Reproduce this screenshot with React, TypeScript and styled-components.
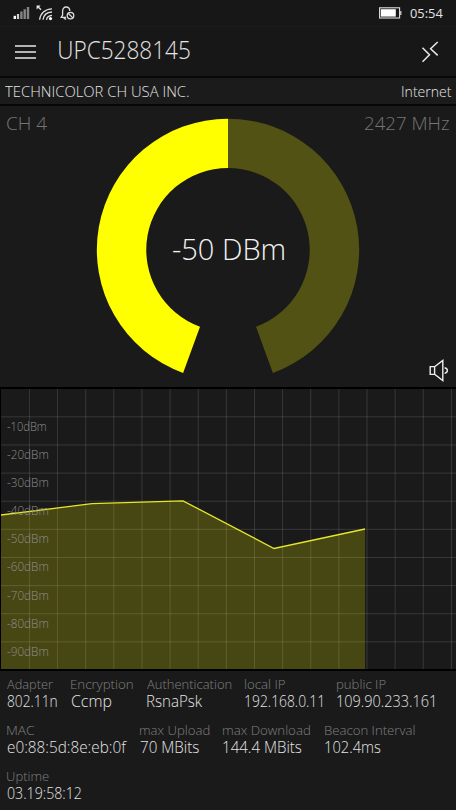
import React, { useLayoutEffect, useRef } from "react";
import styled, { createGlobalStyle } from "styled-components";

const GlobalStyle = createGlobalStyle`
  * { box-sizing: border-box; }
  html, body { margin: 0; padding: 0; background: #1a1a1a; }
  body { font-family: "Open Sans", "Noto Sans", sans-serif; font-weight: 300; overflow: hidden; }
  svg { display: block; }
`;

const Screen = styled.main`
  width: 456px;
  height: 810px;
  display: flex;
  flex-direction: column;
  background: #1a1a1a;
  color: #e4e4e4;
`;

const LabelBox = styled.span<{ $width: number; $size: number; $line: number; $color?: string; $weight?: number }>`
  display: block;
  flex: none;
  width: ${(p) => p.$width}px;
  height: ${(p) => p.$line}px;
  font-size: ${(p) => p.$size}px;
  line-height: ${(p) => p.$line}px;
  font-weight: ${(p) => p.$weight ?? 300};
  color: ${(p) => p.$color ?? "inherit"};
  white-space: nowrap;
`;

const LabelText = styled.span`
  display: inline-block;
  transform-origin: 0 50%;
`;

type LabelProps = { text: string; width: number; size: number; line: number; color?: string; weight?: number };

/* Condenses a line of text so that its visible glyphs span exactly `width`. */
function Label({ text, width, size, line, color, weight }: LabelProps) {
  const ref = useRef<HTMLSpanElement>(null);
  useLayoutEffect(() => {
    const el = ref.current;
    const ctx = document.createElement("canvas").getContext("2d");
    if (!el || !ctx) return;
    const cs = getComputedStyle(el);
    ctx.font = `${cs.fontWeight} ${cs.fontSize} ${cs.fontFamily}`;
    const m = ctx.measureText(text);
    const scale = width / (m.actualBoundingBoxLeft + m.actualBoundingBoxRight);
    el.style.transform = `translateX(${m.actualBoundingBoxLeft * scale}px) scaleX(${scale})`;
  }, [text, width, size, weight]);
  return (
    <LabelBox $width={width} $size={size} $line={line} $color={color} $weight={weight}>
      <LabelText ref={ref}>{text}</LabelText>
    </LabelBox>
  );
}

const StatusBar = styled.header`
  height: 26px;
  padding: 0 13px 0 13px;
  display: flex;
  justify-content: space-between;
  background: #171717;
`;

const StatusGroup = styled.div<{ $gap: number }>`
  display: flex;
  align-items: center;
  gap: ${(p) => p.$gap}px;
`;

const TitleBar = styled.div`
  height: 50px;
  padding: 0 17px 0 15px;
  display: flex;
  align-items: center;
  background: #171717;
  border-top: 1px solid #1c1c1c;
`;

const IconButton = styled.button`
  display: flex;
  padding: 0;
  border: 0;
  background: none;
  color: #e8e8e8;
`;

const TitleSlot = styled.div`
  flex: 1;
  padding: 0 0 6px 23px;
`;

const VendorBar = styled.div`
  height: 30px;
  padding: 0 5px 1px;
  display: flex;
  justify-content: space-between;
  align-items: center;
  background: #1b1b1b;
  border-top: 2px solid #080808;
  border-bottom: 2px solid #060606;
`;

const GaugePanel = styled.section`
  height: 281px;
  padding: 0 7px;
  display: grid;
  grid-template-columns: 85px 1fr 85px;
`;

const GaugeStack = styled.div`
  display: grid;
  place-items: center;
  > * { grid-area: 1 / 1; }
`;

const Reading = styled.div`
  padding-top: 4px;
`;

const Side = styled.div<{ $end?: boolean }>`
  display: flex;
  flex-direction: column;
  justify-content: space-between;
  align-items: ${(p) => (p.$end ? "flex-end" : "flex-start")};
  padding: 4px 0 5px;
`;

const ChartPanel = styled.section`
  height: 284px;
  display: grid;
  border: solid #000;
  border-width: 2px 0 2px 1px;
  > * { grid-area: 1 / 1; }
`;

const AxisLabels = styled.div`
  display: flex;
  flex-direction: column;
  gap: 8.1px;
  padding: 28px 0 0 6px;
`;

const Details = styled.section`
  flex: 1;
  display: flex;
  flex-direction: column;
  gap: 10.2px;
  padding: 4px 0 0 7px;
`;

const DetailRow = styled.div<{ $columns: string }>`
  display: grid;
  grid-template-columns: ${(p) => p.$columns};
`;

const Detail = styled.div`
  height: 36px;
`;

function SignalIcon() {
  return (
    <svg width="17" height="14" viewBox="0 0 17 14">
      <path d="M1.8 13V9.8" stroke="#fff" strokeWidth="2.4" />
      <path d="M8.4 13V5.5M11.7 13V3.2M15 13V1" stroke="#858585" strokeWidth="2.4" />
      <path d="M5 13V8" stroke="#d0d0d0" strokeWidth="2.2" />
    </svg>
  );
}

function WifiIcon() {
  return (
    <svg width="18" height="17" viewBox="0 0 18 17" fill="none" stroke="#ddd" strokeWidth="1.35">
      <path d="M.6.4h4L.6 4.4z" fill="#eee" stroke="none" />
      <path d="m2 1.8 3 3" />
      <path d="M3.6 14.8C4.2 8.4 9 4 16 3.8M7 14.8C7.5 10.3 11 7.3 16 7M10.5 14.8c.3-2.6 2.3-4.1 5.5-4.4" />
      <circle cx="14.5" cy="13.6" r="1.6" fill="#fff" stroke="none" />
    </svg>
  );
}

function QuietIcon() {
  return (
    <svg width="15" height="15" viewBox="0 0 15 15" fill="none" stroke="#ddd" strokeWidth="1.3">
      <path d="M6 11.3H1.2L2.6 9V5.3C2.6 2.7 4 1 6.2 1s3.5 1.4 3.6 4M3.8 11.5c.2 1.2 1.2 1.7 2.4 1.4" />
      <circle cx="10.5" cy="9.6" r="3.3" />
      <path d="m8.2 7.3 4.6 4.6" />
    </svg>
  );
}

function BatteryIcon() {
  return (
    <svg width="23" height="12" viewBox="0 0 23 12">
      <rect x=".6" y=".8" width="20" height="10.2" fill="none" stroke="#e0e0e0" strokeWidth="1.1" />
      <path d="M1.8 2.2h15v7.4h-15z" fill="#fff" />
      <path d="M21.8 4v4" stroke="#ddd" strokeWidth="1.2" />
    </svg>
  );
}

function SpeakerIcon() {
  return (
    <svg width="20" height="23" viewBox="0 0 20 23" fill="none" stroke="#eee" strokeWidth="1.4">
      <path d="M1.2 7.6h4.4v7.8H1.2zM5.6 7.7l8.2-6.3v20.2l-8.2-6.3M15.6 8.8c3.7.8 3.7 4.8 0 5.6" />
    </svg>
  );
}

function Gauge() {
  return (
    <svg width="264" height="258" viewBox="96 118 264 258">
      <path d="M228 118.7A131.1 131.1 0 0 0 183.1 373L200 326.7A81.9 81.9 0 0 1 228 167.9Z" fill="#ff0" />
      <path d="M228 118.7A131.1 131.1 0 0 1 272.9 373L256 326.7A81.9 81.9 0 0 0 228 167.9Z" fill="#525215" />
    </svg>
  );
}

const PITCH = 28.13;
const columns = Array.from({ length: 16 }, (_, i) => (i + 1) * PITCH + 0.3);
const rows = Array.from({ length: 9 }, (_, i) => (i + 1) * PITCH - 0.3);
const trace = "0,126 91,114.7 182,111.8 273,159.5 364,140";
const levels = [10, 20, 30, 40, 50, 60, 70, 80, 90];

function SignalChart() {
  return (
    <svg width="455" height="280" viewBox="0 0 455 280">
      <g stroke="#fff" strokeOpacity=".13">
        {columns.map((x) => <path key={x} d={`M${x} 0V280`} />)}
        {rows.map((y) => <path key={y} d={`M0 ${y}H455`} />)}
      </g>
      <polygon points={`${trace} 364,280 0,280`} fill="#ff0" fillOpacity=".2" />
      <polyline points={trace} fill="none" stroke="#e6e62a" strokeWidth="1.3" />
    </svg>
  );
}

type Item = { name: string; nameWidth: number; value: string; valueWidth: number };

const details: { columns: string; items: Item[] }[] = [
  {
    columns: "63.5px 76px 98.5px 92px 1fr",
    items: [
      { name: "Adapter", nameWidth: 46, value: "802.11n", valueWidth: 49.5 },
      { name: "Encryption", nameWidth: 62, value: "Ccmp", valueWidth: 40.5 },
      { name: "Authentication", nameWidth: 84.5, value: "RsnaPsk", valueWidth: 55.5 },
      { name: "local IP", nameWidth: 40, value: "192.168.0.11", valueWidth: 77.5 },
      { name: "public IP", nameWidth: 48.5, value: "109.90.233.161", valueWidth: 97.5 },
    ],
  },
  {
    columns: "132.5px 83.5px 101.5px 1fr",
    items: [
      { name: "MAC", nameWidth: 27.5, value: "e0:88:5d:8e:eb:0f", valueWidth: 120 },
      { name: "max Upload", nameWidth: 69.5, value: "70 MBits", valueWidth: 59 },
      { name: "max Download", nameWidth: 87, value: "144.4 MBits", valueWidth: 78.5 },
      { name: "Beacon Interval", nameWidth: 89.5, value: "102.4ms", valueWidth: 55.5 },
    ],
  },
  { columns: "1fr", items: [{ name: "Uptime", nameWidth: 42, value: "03.19:58:12", valueWidth: 74 }] },
];

export default function App() {
  return (
    <Screen>
      <GlobalStyle />
      <StatusBar>
        <StatusGroup $gap={6}>
          <SignalIcon />
          <WifiIcon />
          <QuietIcon />
        </StatusGroup>
        <StatusGroup $gap={8}>
          <BatteryIcon />
          <Label text="05:54" width={33} size={13.5} line={26} weight={400} />
        </StatusGroup>
      </StatusBar>
      <TitleBar>
        <IconButton aria-label="Menu">
          <svg width="21" height="16" viewBox="0 0 21 16" stroke="currentColor" strokeWidth="1.5">
            <path d="M0 2h21M0 8h21M0 14h21" />
          </svg>
        </IconButton>
        <TitleSlot>
          <Label text="UPC5288145" width={130.5} size={25.5} line={34} />
        </TitleSlot>
        <IconButton aria-label="Connection">
          <svg width="18" height="22" viewBox="0 0 18 22" fill="none" stroke="currentColor" strokeWidth="1.5">
            <path d="m1.5 6.8 7 7-7 7M16.7 1 9.6 7.8l7.1 6.6" />
          </svg>
        </IconButton>
      </TitleBar>
      <VendorBar>
        <Label text="TECHNICOLOR CH USA INC." width={184} size={15} line={24} />
        <Label text="Internet" width={49.5} size={15} line={24} />
      </VendorBar>
      <GaugePanel>
        <Side>
          <Label text="CH 4" width={40.5} size={18.5} line={25} color="#767676" />
        </Side>
        <GaugeStack>
          <Gauge />
          <Reading>
            <Label text="-50 DBm" width={111} size={28.5} line={40} color="#f2f2f2" />
          </Reading>
        </GaugeStack>
        <Side $end>
          <Label text="2427 MHz" width={84} size={18.5} line={25} color="#767676" />
          <IconButton aria-label="Sound">
            <SpeakerIcon />
          </IconButton>
        </Side>
      </GaugePanel>
      <ChartPanel>
        <AxisLabels>
          {levels.map((n) => (
            <Label key={n} text={`-${n}dBm`} width={n === 10 ? 39 : 41} size={12.2} line={20} color="#8e8e8e" />
          ))}
        </AxisLabels>
        <SignalChart />
      </ChartPanel>
      <Details>
        {details.map((row) => (
          <DetailRow key={row.columns} $columns={row.columns}>
            {row.items.map((item) => (
              <Detail key={item.name}>
                <Label text={item.name} width={item.nameWidth} size={13} line={18} color="#808080" />
                <Label text={item.value} width={item.valueWidth} size={15.8} line={16} />
              </Detail>
            ))}
          </DetailRow>
        ))}
      </Details>
    </Screen>
  );
}
